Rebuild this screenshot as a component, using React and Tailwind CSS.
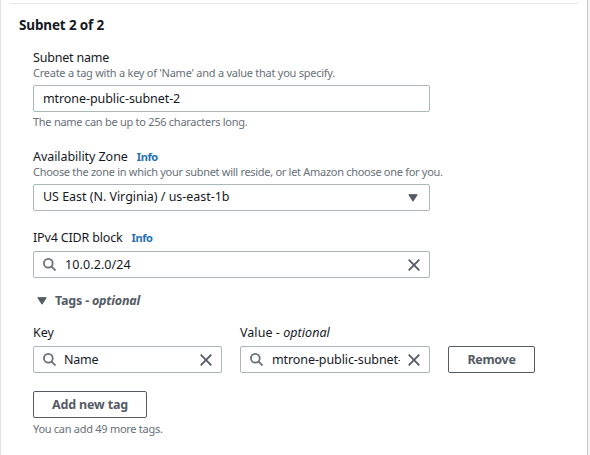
import React from "react";

function SearchIcon() {
  return (
    <svg className="h-[13px] w-[13px] shrink-0" viewBox="0 0 13 13" fill="none" stroke="#687078" strokeWidth="1.8">
      <circle cx="5.3" cy="5.3" r="4.4" />
      <path d="M8.4 8.4 12.5 12.5" />
    </svg>
  );
}

function CloseIcon() {
  return (
    <svg className="h-3 w-3 shrink-0" viewBox="0 0 12 12" fill="none" stroke="#545b64" strokeWidth="1.8">
      <path d="M0.7 0.7 11.3 11.3M11.3 0.7 0.7 11.3" />
    </svg>
  );
}

function Caret() {
  return (
    <svg className="h-2 w-[10px] shrink-0" viewBox="0 0 10 8">
      <path d="M0.8 0.7H9.2L5 7.2Z" fill="#545b64" stroke="#545b64" strokeLinejoin="round" />
    </svg>
  );
}

const box = "flex h-[27px] items-center rounded-[2px] border border-[#aab7b8] bg-white pl-[9px] text-[12.5px]";
const label = "h-[18px] text-[12.5px] leading-[18px] whitespace-nowrap";
const hint = "h-[14px] text-[11px] leading-[14px] text-[#687078] whitespace-nowrap";
const button = "flex h-[27px] items-center justify-center rounded-[2px] border border-[#545b64] pt-[2px] text-[12.5px] font-bold text-[#545b64] whitespace-nowrap";

function Info() {
  return <a className="ml-[9px] text-[11px] font-bold tracking-[-0.4px] text-[#1f70b3]">Info</a>;
}

export default function App() {
  return (
    <div className="flex h-[455px] w-[590px] overflow-hidden bg-[#f5f5f5] font-['Noto_Sans',sans-serif] text-[#16191f]">
      <main className="w-[588px] border-r border-l border-r-[#c9c9c9] border-l-[#e2e4e4] bg-white">
        <div className="mx-[9px] mt-[3px] h-px bg-[#e6e8e8]" />
        <h2 className="mt-3 ml-[18px] h-[18px] text-[13.5px] leading-[18px] font-bold whitespace-nowrap"><span className="tracking-[-0.15px]">Subnet 2 of 2</span></h2>
        <div className="ml-8 w-[502px]">
          <section className="mt-[15px] w-[397px]">
            <div className={label}><span className="tracking-[-0.2px]">Subnet name</span></div>
            <div className={`${hint} -mt-px`}><span className="tracking-[-0.255px]">Create a tag with a key of 'Name' and a value that you specify.</span></div>
            <div className={`${box} mt-[5px]`}><span className="pt-px tracking-[-0.08px]">mtrone-public-subnet-2</span></div>
            <div className={`${hint} mt-[3px]`}><span className="tracking-[-0.27px]">The name can be up to 256 characters long.</span></div>
          </section>
          <section className="mt-[19px] w-[397px]">
            <div className={label}><span className="tracking-[-0.06px]">Availability Zone</span><Info /></div>
            <div className={`${hint} -mt-px`}><span className="tracking-[-0.295px]">Choose the zone in which your subnet will reside, or let Amazon choose one for you.</span></div>
            <div className={`${box} mt-[5px] justify-between pr-[11px]`}><span className="tracking-[-0.03px]">US East (N. Virginia) / us-east-1b</span><Caret /></div>
          </section>
          <section className="mt-[18px] w-[397px]">
            <div className={label}><span className="tracking-[-0.16px]">IPv4 CIDR block</span><Info /></div>
            <div className={`${box} mt-[4px] pr-[9px]`}><SearchIcon /><span className="mr-auto ml-[9px] pt-[2px] tracking-[0.1px]">10.0.2.0/24</span><CloseIcon /></div>
          </section>
          <div className="mt-[14px] flex h-[18px] items-center pl-[4px] text-[12.5px] font-bold text-[#545b64]"><Caret /><span className="ml-[8px] tracking-[-0.2px]">Tags - <i>optional</i></span></div>
          <div className="mt-[14px] flex">
            <div className="w-[189px]">
              <div className={label}><span>Key</span></div>
              <div className={`${box} mt-[4px] pr-[9px]`}><SearchIcon /><span className="mr-auto ml-[8px] pt-[2px] tracking-[-0.2px]">Name</span><CloseIcon /></div>
            </div>
            <div className="ml-[18px] w-[190px]">
              <div className={label}><span className="tracking-[0.05px]">Value - <i>optional</i></span></div>
              <div className={`${box} mt-[4px] pr-[9px]`}><SearchIcon /><span className="mr-auto ml-[9px] w-[128px] overflow-hidden pt-[2px] tracking-[-0.09px] whitespace-nowrap">mtrone-public-subnet-2</span><CloseIcon /></div>
            </div>
            <button className={`${button} mt-[22px] ml-[18px] w-[87px]`}><span className="tracking-[-0.3px]">Remove</span></button>
          </div>
          <button className={`${button} mt-[18px] w-[114px]`}><span className="tracking-[-0.15px]">Add new tag</span></button>
          <div className={`${hint} mt-[4px]`}><span className="tracking-[-0.28px]">You can add 49 more tags.</span></div>
        </div>
      </main>
    </div>
  );
}
